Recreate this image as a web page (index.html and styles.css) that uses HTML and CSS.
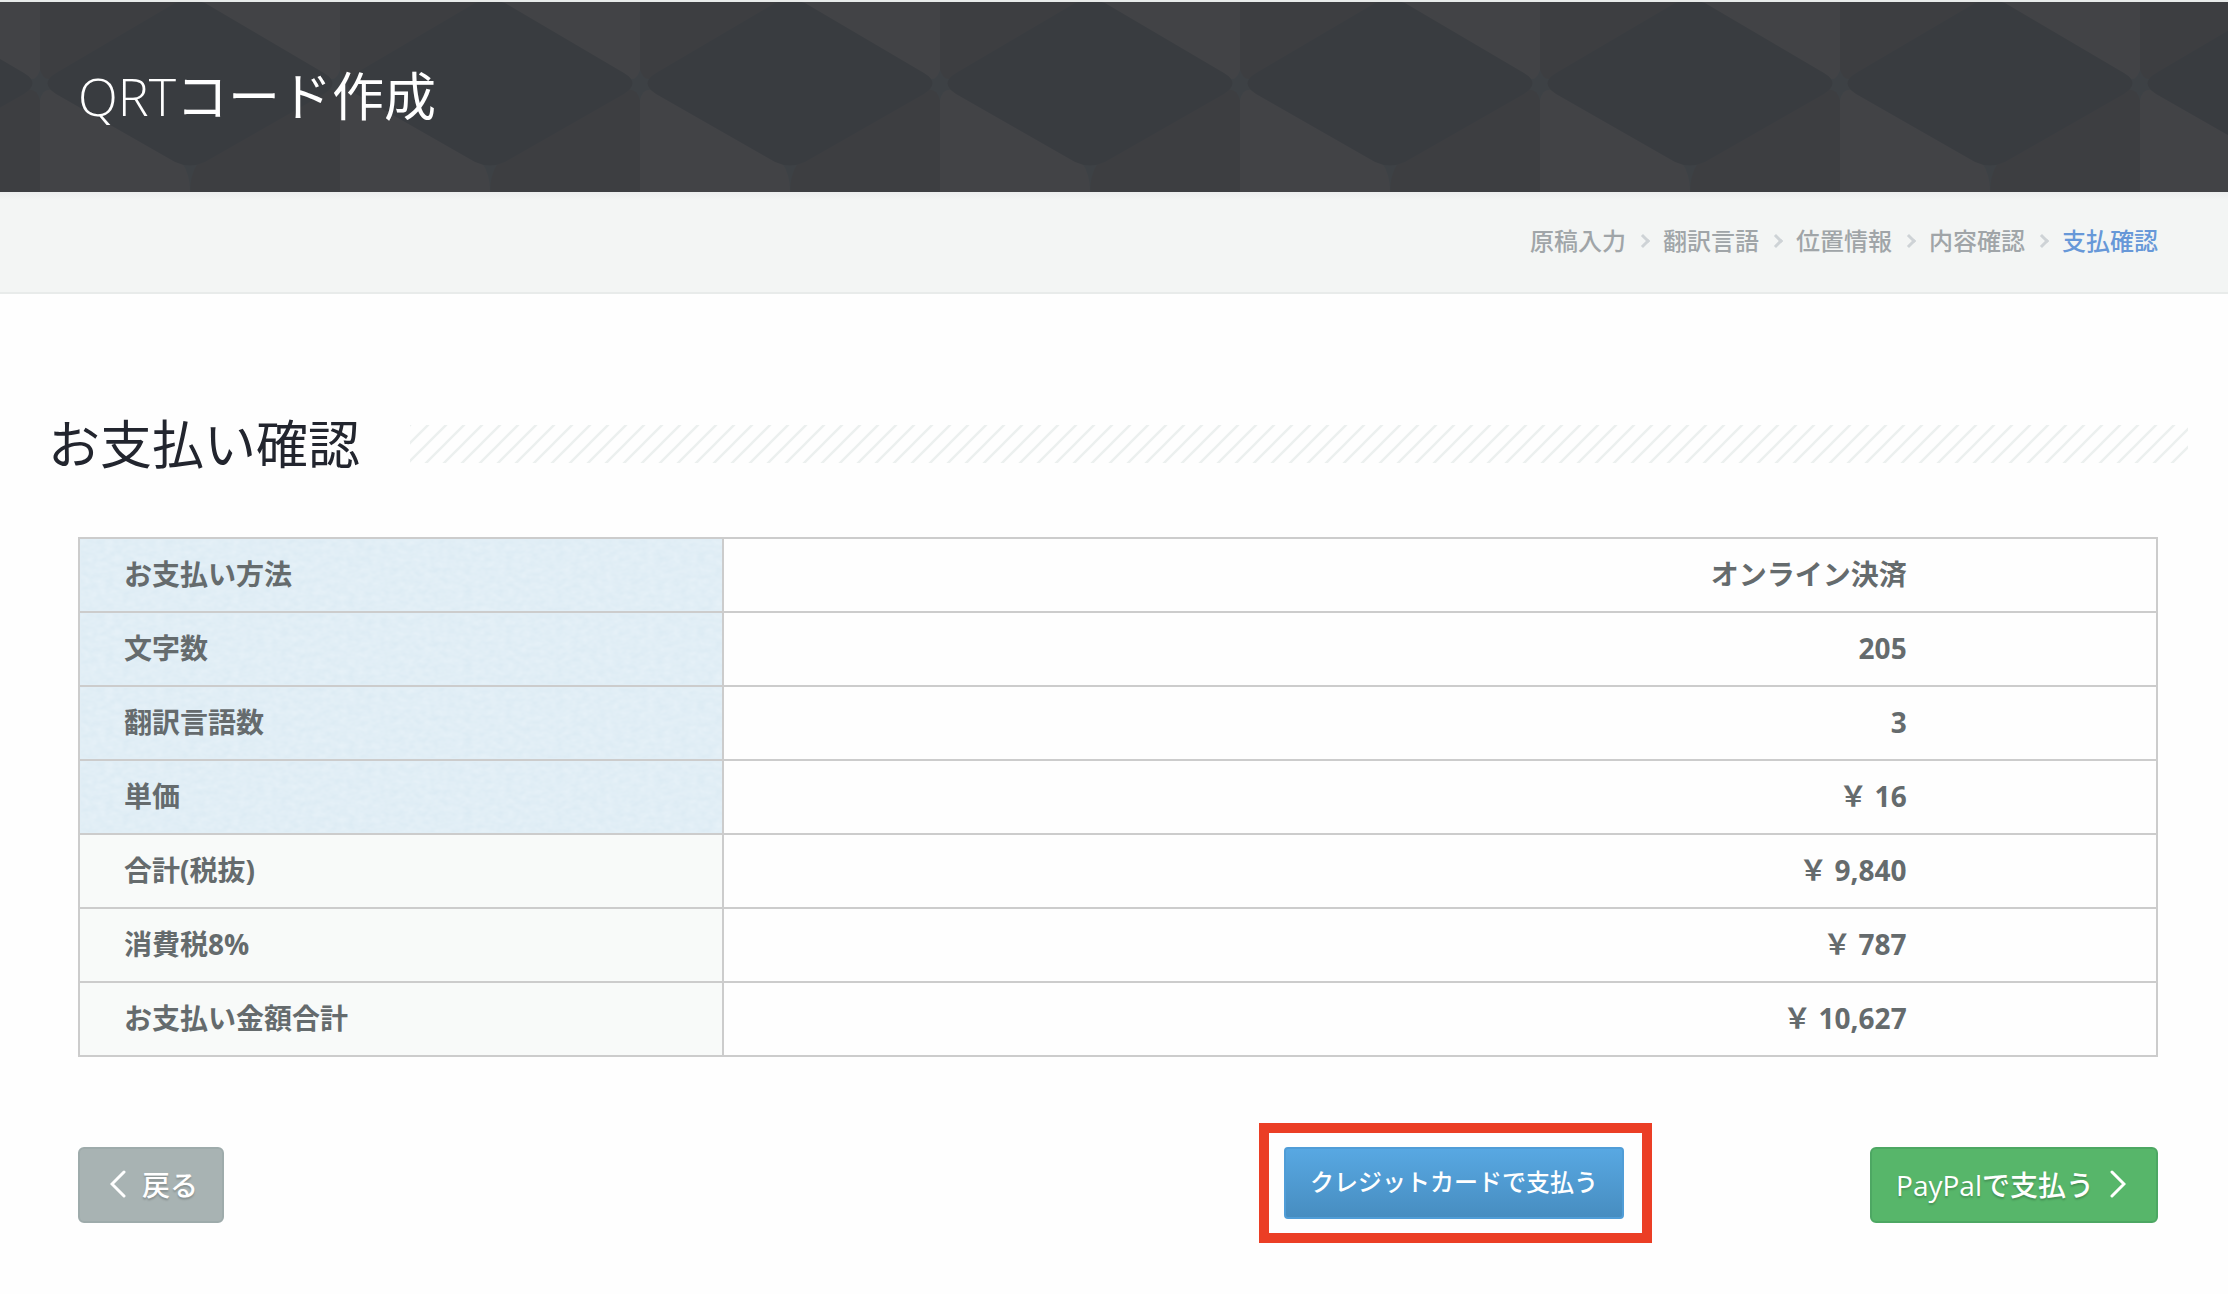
FILE: index.html
```html
<!DOCTYPE html>
<html lang="ja">
<head>
    <meta charset="utf-8">
    <meta name="viewport" content="width=device-width, initial-scale=1">
    <title>QRTコード作成</title>
    <link rel="stylesheet" href="styles.css">
</head>
<body>
    <header class="page-title">
        <svg class="page-title-bg" width="100%" height="100%" aria-hidden="true">
            <defs>
                <pattern id="cubes" x="40" y="0" width="300" height="190" patternUnits="userSpaceOnUse">
                    <rect width="300" height="190" fill="#3d4145"/>
                    <path d="M0 0H150L12 76Q4 80 0 68Z" fill="#3d3e41"/>
                    <path d="M150 0H300V68Q296 80 288 76Z" fill="#424346"/>
                    <path d="M0 190V98Q3 86 12 88L142 161Q150 172 150 190Z" fill="#424346"/>
                    <path d="M300 190V98Q297 86 288 88L158 161Q150 172 150 190Z" fill="#3d3e41"/>
                    <path d="M16 71L135 1Q150 -4 165 1L284 71Q301 81 284 92L165 160Q150 167 135 160L16 92Q-1 81 16 71Z" fill="#393c40"/>
                </pattern>
            </defs>
            <rect width="100%" height="100%" fill="url(#cubes)"/>
        </svg>
        <h1>QRT<span>コード作成</span></h1>
    </header>

    <nav class="steps">
        <ol>
            <li>原稿入力</li>
            <li>翻訳言語</li>
            <li>位置情報</li>
            <li>内容確認</li>
            <li class="active">支払確認</li>
        </ol>
    </nav>

    <main class="content">
        <div class="heading">
            <h2>お支払い確認</h2>
            <svg class="heading-lines" aria-hidden="true">
                <defs>
                    <pattern id="lines" width="18" height="18" patternUnits="userSpaceOnUse">
                        <path d="M-2 20L20 -2M-2 2L2 -2M16 20L20 16" stroke="#ecf0ef" stroke-width="2.4"/>
                    </pattern>
                </defs>
                <rect width="100%" height="100%" fill="url(#lines)"/>
            </svg>
        </div>

        <div class="payment">
            <table>
                <tr class="blue"><th scope="row">お支払い方法</th><td>オンライン決済</td></tr>
                <tr class="blue"><th scope="row">文字数</th><td>205</td></tr>
                <tr class="blue"><th scope="row">翻訳言語数</th><td>3</td></tr>
                <tr class="blue"><th scope="row">単価</th><td>&#xFFE5; 16</td></tr>
                <tr><th scope="row">合計(税抜)</th><td>&#xFFE5; 9,840</td></tr>
                <tr><th scope="row">消費税8%</th><td>&#xFFE5; 787</td></tr>
                <tr><th scope="row">お支払い金額合計</th><td>&#xFFE5; 10,627</td></tr>
            </table>

            <div class="buttons">
                <button type="button" class="btn btn-back">
                    <svg class="arrow" viewBox="0 0 16 28" aria-hidden="true"><path d="M14 2L2 14L14 26"/></svg>
                    戻る
                </button>
                <div class="highlight">
                    <button type="button" class="btn-card">クレジットカードで支払う</button>
                </div>
                <button type="button" class="btn btn-paypal">
                    PayPalで支払う
                    <svg class="arrow" viewBox="0 0 16 28" aria-hidden="true"><path d="M2 2L14 14L2 26"/></svg>
                </button>
            </div>
        </div>
    </main>

    <!-- paper grain for the blue cells -->
    <svg class="filters" width="0" height="0" aria-hidden="true">
        <filter id="paper" x="0" y="0" width="100%" height="100%" color-interpolation-filters="sRGB">
            <feTurbulence type="fractalNoise" baseFrequency="0.12 0.18" numOctaves="2" seed="4"/>
            <feColorMatrix values="0.05 0 0 0 0.857  0.03 0 0 0 0.918  0.02 0 0 0 0.953  0 0 0 0 1"/>
        </filter>
    </svg>
</body>
</html>
```
FILE: styles.css
```css
* {
    box-sizing: border-box;
}

body {
    margin: 0;
    background-color: #fefefe;
    color: #656b6d;
    font-family: "Open Sans", "Noto Sans CJK JP", sans-serif;
    font-size: 28px;
    line-height: 40px;
}

h1, h2 {
    margin: 0;
    font-size: 52px;
    line-height: 72px;
}

/* Title bar */
.page-title {
    position: relative;
    padding: 58px 78px 60px;
    border-top: 2px solid #e8ebea;
    background-color: #3c3d40;
}

.page-title-bg {
    position: absolute;
    top: 0;
    left: 0;
}

.page-title h1 {
    position: relative;
    color: #fff;
    font-weight: 300;
}

.page-title span {
    font-weight: 400;
}

/* Steps */
.steps {
    padding: 29px 70px 31px;
    border-bottom: 2px solid #e8ebea;
    background-color: #f3f5f4;
    background-image: linear-gradient(#ebeded, #f3f5f4 8px);
}

.steps ol {
    display: flex;
    justify-content: flex-end;
    margin: 0;
    padding: 0;
    list-style: none;
    font-size: 24px;
    font-weight: 500;
    color: #a0a5a8;
}

.steps li {
    display: flex;
    align-items: center;
}

.steps li + li::before {
    content: "";
    width: 7px;
    height: 7px;
    margin: 0 15px 0 12px;
    border: solid #ced3d6;
    border-width: 3px 3px 0 0;
    transform: rotate(45deg);
}

.steps .active {
    color: #6798d8;
}

/* Content */
.content {
    padding: 114px 40px 52px 48px;
}

.heading {
    display: flex;
    align-items: center;
    gap: 50px;
    margin-bottom: 57px;
}

.heading h2 {
    color: #22252e;
    font-weight: 400;
}

.heading-lines {
    flex: 1;
    height: 38px;
}

.payment {
    padding: 0 30px;
}

table {
    width: 100%;
    border-collapse: collapse;
    table-layout: fixed;
    font-weight: bold;
}

th, td {
    height: 74px;
    padding: 0 44px 2px;
    border: 2px solid #ccc;
}

th {
    position: relative;
    z-index: 0;
    width: 31%;
    background-color: #f8faf9;
    text-align: left;
}

td {
    padding-right: 12%;
    text-align: right;
}

.blue th {
    background-color: #e1eef6;
}

.blue th::before {
    content: "";
    position: absolute;
    inset: 1px;
    z-index: -1;
    filter: url(#paper);
}

/* Buttons */
.buttons {
    display: flex;
    align-items: flex-start;
    margin-top: 66px;
}

.btn, .btn-card {
    border: 2px solid;
    color: #fff;
    font-family: inherit;
    font-weight: 500;
    cursor: pointer;
}

.btn {
    display: flex;
    align-items: center;
    height: 76px;
    margin-top: 24px;
    padding: 0 24px 2px;
    border-radius: 6px;
    font-size: 28px;
    text-shadow: 0 2px 2px rgba(0, 0, 0, 0.2);
}

.btn-back {
    gap: 16px;
    padding-left: 30px;
    background-color: #a8b3b3;
    border-color: #9eabab;
}

.btn-paypal {
    gap: 16px;
    padding-right: 30px;
    background-color: #57b66a;
    border-color: #4da763;
}

.arrow {
    width: 16px;
    height: 28px;
    fill: none;
    stroke: #fff;
    stroke-width: 3;
    stroke-linecap: round;
}

.highlight {
    margin: 0 218px 0 auto;
    padding: 14px 18px 14px 15px;
    border: 10px solid #eb3e25;
}

.btn-card {
    display: block;
    height: 72px;
    padding: 0 24px 6px;
    border-color: #509dd7;
    border-radius: 4px;
    background-image: linear-gradient(#58a8e2, #478dc0);
    font-size: 24px;
}
```
